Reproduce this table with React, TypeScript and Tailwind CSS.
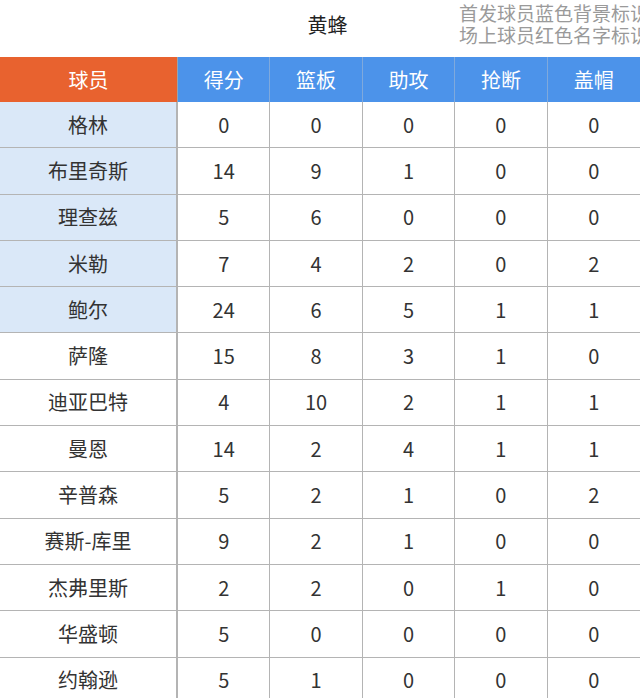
import React from "react";

const rows: [string, number, number, number, number, number, boolean][] = [
  ["格林", 0, 0, 0, 0, 0, true],
  ["布里奇斯", 14, 9, 1, 0, 0, true],
  ["理查兹", 5, 6, 0, 0, 0, true],
  ["米勒", 7, 4, 2, 0, 2, true],
  ["鲍尔", 24, 6, 5, 1, 1, true],
  ["萨隆", 15, 8, 3, 1, 0, false],
  ["迪亚巴特", 4, 10, 2, 1, 1, false],
  ["曼恩", 14, 2, 4, 1, 1, false],
  ["辛普森", 5, 2, 1, 0, 2, false],
  ["赛斯-库里", 9, 2, 1, 0, 0, false],
  ["杰弗里斯", 2, 2, 0, 1, 0, false],
  ["华盛顿", 5, 0, 0, 0, 0, false],
  ["约翰逊", 5, 1, 0, 0, 0, false],
];

const heads = ["得分", "篮板", "助攻", "抢断", "盖帽"];

export default function App() {
  return (
    <div
      className="w-[640px] h-[698px] overflow-hidden bg-white text-[#333]"
      style={{ fontFamily: '"Noto Sans CJK SC", "Noto Sans", sans-serif' }}
    >
      <div className="relative h-[57px] flex items-center justify-center overflow-hidden">
        <span className="text-[20px] ml-[15px] mt-[-8px] text-[#222]">黄蜂</span>
        <div className="absolute left-[459px] top-[2px] whitespace-nowrap text-[19px] leading-[22px] text-[#9a9a9a]">
          <div>首发球员蓝色背景标识</div>
          <div>场上球员红色名字标识</div>
        </div>
      </div>
      <div className="grid grid-cols-[178px_repeat(5,1fr)] h-[45px] text-white text-[20px]">
        <div className="bg-[#E8622F] flex items-center justify-center border-r border-[#9aa3ad]">球员</div>
        {heads.map((h, i) => (
          <div
            key={h}
            className={`bg-[#4C93EA] flex items-center justify-center ${i < 4 ? "border-r border-[#7fa9dc]" : ""}`}
          >
            {h}
          </div>
        ))}
      </div>
      {rows.map((r) => (
        <div
          key={r[0]}
          className="grid grid-cols-[178px_repeat(5,1fr)] h-[46.3px] border-b border-[#b4b4b4] text-[20px]"
        >
          <div
            className={`flex items-center justify-center border-r-2 border-[#b4b4b4] ${r[6] ? "bg-[#DAE8F8]" : "bg-white"}`}
          >
            {r[0]}
          </div>
          {[r[1], r[2], r[3], r[4], r[5]].map((v, i) => (
            <div
              key={i}
              className={`flex items-center justify-center ${i < 4 ? "border-r border-[#b4b4b4]" : ""}`}
            >
              {v}
            </div>
          ))}
        </div>
      ))}
    </div>
  );
}
